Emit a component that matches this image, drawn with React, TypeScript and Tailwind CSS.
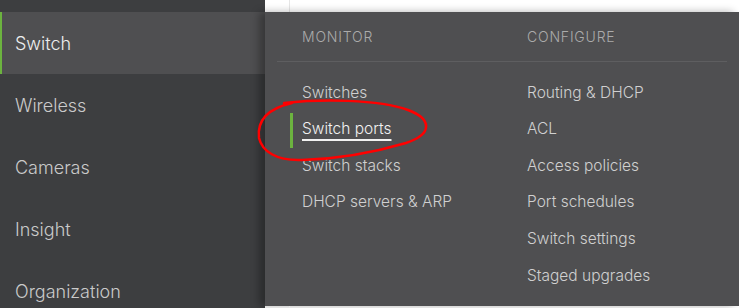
import React from "react";

const sideItems = ["Wireless", "Cameras", "Insight", "Organization"];

const monitor = [
  { label: "Switches" },
  { label: "Switch ports", active: true },
  { label: "Switch stacks" },
  { label: "DHCP servers & ARP" },
];

const configure = [
  "Routing & DHCP",
  "ACL",
  "Access policies",
  "Port schedules",
  "Switch settings",
  "Staged upgrades",
];

export default function App() {
  return (
    <div
      className="relative flex w-[739px] h-[308px] overflow-hidden bg-white"
      style={{ fontFamily: "Inter, 'Liberation Sans', sans-serif" }}
    >
      {/* sidebar */}
      <div className="w-[265px] shrink-0 flex flex-col bg-[#3d3e40] overflow-hidden">
        <div className="h-[12px] shrink-0" />
        <div className="h-[62px] shrink-0 flex items-center pl-[13px] border-l-[2px] border-[#6cb33f] bg-[#4f4f51] text-[18px] font-light text-[#ededed]">
          Switch
        </div>
        {sideItems.map((item) => (
          <div key={item} className="h-[62px] shrink-0 flex items-center pl-[15px] text-[18px] font-light text-[#cacaca]">
            {item}
          </div>
        ))}
      </div>

      {/* right side */}
      <div className="flex-1 flex flex-col">
        <div className="h-[12px] shrink-0 flex">
          <div className="w-[25px] border-r border-[#e6e6e6]" />
        </div>
        <div className="h-[294px] shrink-0 bg-[#4f4f51] shadow-[-6px_0_8px_rgba(0,0,0,0.3)] flex flex-col">
          <div className="h-[50px] shrink-0 mx-[12px] border-b border-[#5e5e60] flex items-center pl-[25px] text-[14px] font-light tracking-[0.8px] text-[#ababab]">
            <div className="w-[225px]">MONITOR</div>
            <div>CONFIGURE</div>
          </div>
          <div className="flex pt-[12px] pl-[25px] ml-[12px]">
            <div className="w-[225px] flex flex-col">
              {monitor.map((m) => (
                <div key={m.label} className="relative h-[36.6px] flex items-center text-[15.5px] font-light text-[#d0d0d0]">
                  {m.active && (
                    <div className="absolute left-[-12px] top-[2px] w-[3px] h-[35px] bg-[#6cb33f]" />
                  )}
                  <span className={m.active ? "text-[#f2f2f2] underline underline-offset-[5px] decoration-[1.5px]" : ""}>
                    {m.label}
                  </span>
                </div>
              ))}
            </div>
            <div className="flex flex-col">
              {configure.map((c) => (
                <div key={c} className="h-[36.6px] flex items-center text-[15.5px] font-light text-[#d0d0d0]">
                  {c}
                </div>
              ))}
            </div>
          </div>
        </div>
        <div className="flex-1 flex">
          <div className="w-[25px] border-r border-[#e6e6e6]" />
        </div>
      </div>

      {/* hand-drawn annotation */}
      <svg className="absolute inset-0 pointer-events-none" width="739" height="308" viewBox="0 0 739 308">
        <path
          d="M 284 103 C 320 99, 378 99, 408 110 C 432 119, 433 134, 406 143 C 372 153, 340 159, 302 160 C 276 161, 262 151, 259 138 C 257 122, 266 109, 292 103"
          fill="none"
          stroke="#ff0000"
          strokeWidth="2.5"
          strokeLinecap="round"
        />
      </svg>
    </div>
  );
}
